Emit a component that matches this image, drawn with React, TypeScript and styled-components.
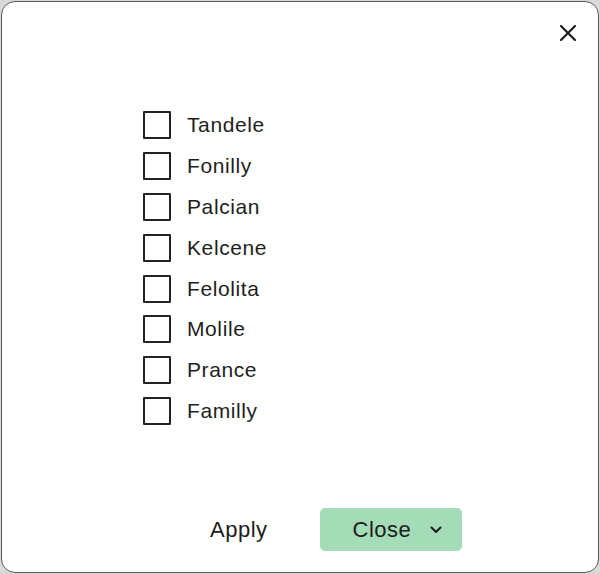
import styled, { createGlobalStyle } from "styled-components";

const GlobalStyle = createGlobalStyle`
  html, body {
    margin: 0;
    padding: 0;
    background: #d9d9d9;
  }
  body {
    font-family: "Liberation Sans", Arial, sans-serif;
    color: #1c1c1c;
  }
`;

const Dialog = styled.div`
  box-sizing: border-box;
  width: 598px;
  height: 572px;
  margin: 1px 0 0 1px;
  background: #fff;
  border: 1.5px solid #5a5a5a;
  border-radius: 14px;
  position: relative;
  display: flex;
  flex-direction: column;
  padding: 109px 0 0 141px;
`;

const CloseIcon = styled.button`
  position: absolute;
  top: 21px;
  right: 20px;
  width: 20px;
  height: 20px;
  padding: 0;
  border: none;
  background: none;
  display: flex;
  align-items: center;
  justify-content: center;
  cursor: pointer;
`;

const List = styled.ul`
  list-style: none;
  margin: 0;
  padding: 0;
  display: flex;
  flex-direction: column;
  gap: 12.9px;
`;

const Row = styled.li`
  display: flex;
  align-items: center;
  gap: 16px;
  height: 28px;
`;

const Box = styled.span`
  box-sizing: border-box;
  width: 28px;
  height: 28px;
  border: 2px solid #222;
  border-radius: 1px;
  background: #fff;
`;

const Label = styled.span`
  font-size: 21px;
  letter-spacing: 0.6px;
  color: #1e1e1e;
`;

const Footer = styled.div`
  margin-top: auto;
  margin-bottom: 21px;
  margin-left: 67px;
  display: flex;
  align-items: center;
  gap: 52px;
`;

const TextButton = styled.button`
  border: none;
  background: none;
  padding: 0;
  font-family: inherit;
  font-size: 22px;
  letter-spacing: 0.5px;
  color: #1c1c1c;
  cursor: pointer;
`;

const PrimaryButton = styled.button`
  box-sizing: border-box;
  width: 142px;
  height: 43px;
  border: none;
  border-radius: 5px;
  background: #a4dcb7;
  font-family: inherit;
  font-size: 22px;
  letter-spacing: 0.5px;
  color: #1c1c1c;
  display: flex;
  align-items: center;
  justify-content: flex-start;
  gap: 19px;
  padding: 0 0 0 33px;
  cursor: pointer;
`;

const items = [
  "Tandele",
  "Fonilly",
  "Palcian",
  "Kelcene",
  "Felolita",
  "Molile",
  "Prance",
  "Familly",
];

export default function App() {
  return (
    <>
      <GlobalStyle />
      <Dialog>
        <CloseIcon aria-label="Close">
          <svg width="18" height="18" viewBox="0 0 18 18">
            <path
              d="M2 2L16 16M16 2L2 16"
              stroke="#1c1c1c"
              strokeWidth="2.2"
              strokeLinecap="round"
            />
          </svg>
        </CloseIcon>
        <List>
          {items.map((item) => (
            <Row key={item}>
              <Box />
              <Label>{item}</Label>
            </Row>
          ))}
        </List>
        <Footer>
          <TextButton>Apply</TextButton>
          <PrimaryButton>
            Close
            <svg width="12" height="8" viewBox="0 0 12 8">
              <path
                d="M1.5 1.5L6 6L10.5 1.5"
                fill="none"
                stroke="#1c1c1c"
                strokeWidth="2"
                strokeLinecap="round"
                strokeLinejoin="round"
              />
            </svg>
          </PrimaryButton>
        </Footer>
      </Dialog>
    </>
  );
}
